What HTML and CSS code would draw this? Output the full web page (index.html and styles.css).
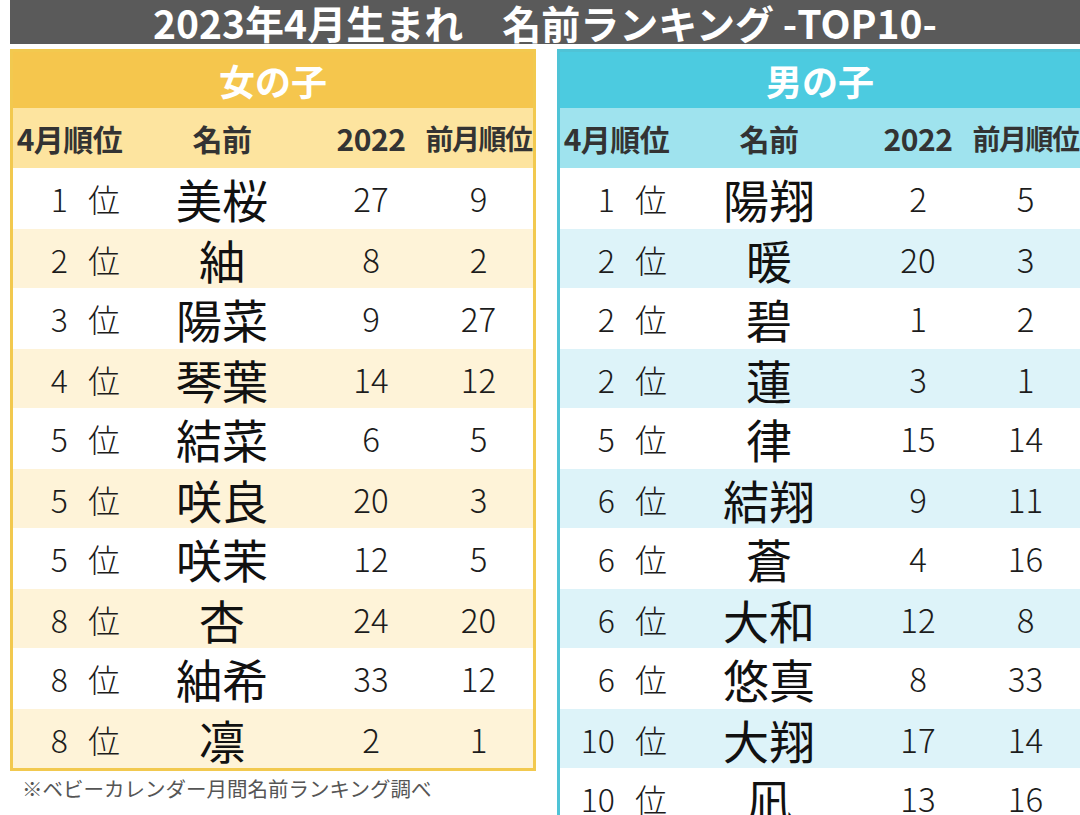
FILE: index.html
```html
<!DOCTYPE html>
<html lang="ja">
<head>
<meta charset="utf-8">
<link rel="stylesheet" href="styles.css">
</head>
<body>
<div class="page">
  <div class="title">2023年4月生まれ　名前ランキング -TOP10-</div>
  <div class="panels">
    <div class="side">
      <div class="table girl">
        <div class="band">女の子</div>
        <div class="row head"><div>4月順位</div><div>名前</div><div>2022</div><div class="prev">前月順位</div></div>
        <div class="row"><div class="rank">1 位</div><div class="name">美桜</div><div class="num">27</div><div class="num">9</div></div>
        <div class="row alt"><div class="rank">2 位</div><div class="name">紬</div><div class="num">8</div><div class="num">2</div></div>
        <div class="row"><div class="rank">3 位</div><div class="name">陽菜</div><div class="num">9</div><div class="num">27</div></div>
        <div class="row alt"><div class="rank">4 位</div><div class="name">琴葉</div><div class="num">14</div><div class="num">12</div></div>
        <div class="row"><div class="rank">5 位</div><div class="name">結菜</div><div class="num">6</div><div class="num">5</div></div>
        <div class="row alt"><div class="rank">5 位</div><div class="name">咲良</div><div class="num">20</div><div class="num">3</div></div>
        <div class="row"><div class="rank">5 位</div><div class="name">咲茉</div><div class="num">12</div><div class="num">5</div></div>
        <div class="row alt"><div class="rank">8 位</div><div class="name">杏</div><div class="num">24</div><div class="num">20</div></div>
        <div class="row"><div class="rank">8 位</div><div class="name">紬希</div><div class="num">33</div><div class="num">12</div></div>
        <div class="row alt"><div class="rank">8 位</div><div class="name">凛</div><div class="num">2</div><div class="num">1</div></div>
      </div>
      <div class="note">※ベビーカレンダー月間名前ランキング調べ</div>
    </div>
    <div class="side">
      <div class="table boy">
        <div class="band">男の子</div>
        <div class="row head"><div>4月順位</div><div>名前</div><div>2022</div><div class="prev">前月順位</div></div>
        <div class="row"><div class="rank">1 位</div><div class="name">陽翔</div><div class="num">2</div><div class="num">5</div></div>
        <div class="row alt"><div class="rank">2 位</div><div class="name">暖</div><div class="num">20</div><div class="num">3</div></div>
        <div class="row"><div class="rank">2 位</div><div class="name">碧</div><div class="num">1</div><div class="num">2</div></div>
        <div class="row alt"><div class="rank">2 位</div><div class="name">蓮</div><div class="num">3</div><div class="num">1</div></div>
        <div class="row"><div class="rank">5 位</div><div class="name">律</div><div class="num">15</div><div class="num">14</div></div>
        <div class="row alt"><div class="rank">6 位</div><div class="name">結翔</div><div class="num">9</div><div class="num">11</div></div>
        <div class="row"><div class="rank">6 位</div><div class="name">蒼</div><div class="num">4</div><div class="num">16</div></div>
        <div class="row alt"><div class="rank">6 位</div><div class="name">大和</div><div class="num">12</div><div class="num">8</div></div>
        <div class="row"><div class="rank">6 位</div><div class="name">悠真</div><div class="num">8</div><div class="num">33</div></div>
        <div class="row alt"><div class="rank">10 位</div><div class="name">大翔</div><div class="num">17</div><div class="num">14</div></div>
        <div class="row"><div class="rank">10 位</div><div class="name">凪</div><div class="num">13</div><div class="num">16</div></div>
      </div>
    </div>
  </div>
</div>
</body>
</html>
```

FILE: styles.css
```css
html, body {
  margin: 0;
  padding: 0;
  background: #ffffff;
}
body {
  width: 1080px;
  height: 815px;
  overflow: hidden;
  font-family: "Noto Sans CJK JP", "Noto Sans", sans-serif;
  color: #1c1c1c;
}
.page {
  width: 1100px;
}
.title {
  margin-left: 10px;
  width: 1070px;
  height: 44px;
  background: #5a5a5a;
  color: #ffffff;
  font-weight: 700;
  font-size: 39px;
  line-height: 44px;
  text-align: center;
  white-space: nowrap;
  overflow: hidden;
}
.panels {
  display: flex;
  gap: 21px;
  margin-top: 5px;
  margin-left: 10px;
}
.side {
  display: flex;
  flex-direction: column;
}
.table {
  width: 520px;
  border: 3px solid #f2c94f;
}
.table.boy {
  border-color: #4fc3d6;
}
.band {
  height: 56px;
  line-height: 56px;
  text-align: center;
  color: #ffffff;
  font-weight: 700;
  font-size: 36px;
  background: #f5c64d;
}
.boy .band {
  background: #4ccbe0;
}
.row {
  display: grid;
  grid-template-columns: 113px 192px 106px 109px;
  height: 60px;
  align-items: center;
  background: #ffffff;
}
.row.alt {
  background: #fef3d8;
  border-top: 1px solid #ffffff;
  height: 59px;
}
.boy .row.alt {
  background: #ddf3f9;
}
.row.head {
  background: #fde49f;
  font-weight: 700;
  font-size: 30px;
  color: #333333;
  text-align: center;
  white-space: nowrap;
}
.boy .row.head {
  background: #9fe3ee;
}
.row.head > div {
  letter-spacing: -0.5px;
}
.row.head > .prev {
  font-size: 28px;
  letter-spacing: -1.5px;
}
.rank {
  text-align: right;
  padding-right: 6px;
  font-size: 32px;
  font-weight: 300;
  word-spacing: 13px;
  white-space: nowrap;
}
.name {
  text-align: center;
  font-size: 46px;
  line-height: 1;
  color: #111111;
}
.num {
  text-align: center;
  font-size: 33px;
  font-weight: 300;
}
.note {
  margin-top: 2px;
  padding-left: 12px;
  font-size: 20.5px;
  color: #555555;
  white-space: nowrap;
}
```
